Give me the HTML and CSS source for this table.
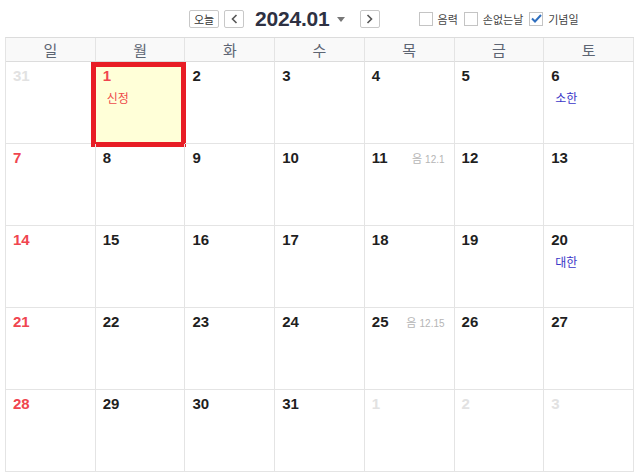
FILE: index.html
```html
<!DOCTYPE html>
<html lang="ko">
<head>
  <meta charset="UTF-8" />
  <meta name="viewport" content="width=device-width, initial-scale=1.0"/>
  <title>달력</title>
  <link rel="stylesheet" href="styles.css">
</head>
<body>
  <div class="toolbar">
    <div class="nav">
      <button type="button" class="btn-today">오늘</button>
      <button type="button" class="btn-arrow">
        <svg width="7" height="10" viewBox="0 0 7 10"><path d="M5.5 1 L1.5 5 L5.5 9" fill="none" stroke="#555" stroke-width="1.6"/></svg>
      </button>
      <span class="month">2024.01</span>
      <span class="caret"></span>
      <button type="button" class="btn-arrow">
        <svg width="7" height="10" viewBox="0 0 7 10"><path d="M1.5 1 L5.5 5 L1.5 9" fill="none" stroke="#555" stroke-width="1.6"/></svg>
      </button>
    </div>
    <div class="options">
      <label class="check"><span class="box"></span>음력</label>
      <label class="check"><span class="box"></span>손없는날</label>
      <label class="check"><span class="box on">
        <svg width="11" height="9" viewBox="0 0 11 9"><path d="M1 4.5 L4 7.5 L10 1" fill="none" stroke="#2f6fbf" stroke-width="2"/></svg>
      </span>기념일</label>
    </div>
  </div>

  <div class="calendar">
    <div class="week-head">
      <div>일</div><div>월</div><div>화</div><div>수</div><div>목</div><div>금</div><div>토</div>
    </div>
    <div class="days">
      <div class="day other"><span class="num">31</span></div>
      <div class="day today"><span class="num sun">1</span><div class="event red">신정</div></div>
      <div class="day"><span class="num">2</span></div>
      <div class="day"><span class="num">3</span></div>
      <div class="day"><span class="num">4</span></div>
      <div class="day"><span class="num">5</span></div>
      <div class="day"><span class="num">6</span><div class="event blue">소한</div></div>

      <div class="day"><span class="num sun">7</span></div>
      <div class="day"><span class="num">8</span></div>
      <div class="day"><span class="num">9</span></div>
      <div class="day"><span class="num">10</span></div>
      <div class="day"><span class="num">11</span><span class="lunar">음 <small>12.1</small></span></div>
      <div class="day"><span class="num">12</span></div>
      <div class="day"><span class="num">13</span></div>

      <div class="day"><span class="num sun">14</span></div>
      <div class="day"><span class="num">15</span></div>
      <div class="day"><span class="num">16</span></div>
      <div class="day"><span class="num">17</span></div>
      <div class="day"><span class="num">18</span></div>
      <div class="day"><span class="num">19</span></div>
      <div class="day"><span class="num">20</span><div class="event blue">대한</div></div>

      <div class="day"><span class="num sun">21</span></div>
      <div class="day"><span class="num">22</span></div>
      <div class="day"><span class="num">23</span></div>
      <div class="day"><span class="num">24</span></div>
      <div class="day"><span class="num">25</span><span class="lunar">음 <small>12.15</small></span></div>
      <div class="day"><span class="num">26</span></div>
      <div class="day"><span class="num">27</span></div>

      <div class="day"><span class="num sun">28</span></div>
      <div class="day"><span class="num">29</span></div>
      <div class="day"><span class="num">30</span></div>
      <div class="day"><span class="num">31</span></div>
      <div class="day other"><span class="num">1</span></div>
      <div class="day other"><span class="num">2</span></div>
      <div class="day other"><span class="num">3</span></div>
    </div>
  </div>
</body>
</html>
```

FILE: styles.css
```css
body {
  font-family: "Liberation Sans", "Noto Sans CJK KR", sans-serif;
  margin: 0;
  padding: 0;
  background-color: white;
  color: #222;
}
.toolbar {
  display: flex;
  align-items: center;
  height: 37px;
  padding-left: 189px;
  box-sizing: border-box;
}
.nav {
  display: flex;
  align-items: center;
}
button {
  background-color: white;
  border: 1px solid #c8c8c8;
  border-radius: 2px;
  padding: 0;
  height: 18px;
  cursor: pointer;
  display: flex;
  align-items: center;
  justify-content: center;
  font-family: "Noto Sans CJK KR", sans-serif;
}
.btn-today {
  width: 30px;
  font-size: 11px;
  color: #333;
}
.btn-arrow {
  width: 20px;
  margin-left: 5px;
}
.month {
  font-size: 21px;
  font-weight: bold;
  color: #2e3142;
  margin-left: 11px;
  letter-spacing: -0.2px;
}
.caret {
  width: 0;
  height: 0;
  border-left: 4px solid transparent;
  border-right: 4px solid transparent;
  border-top: 5px solid #777;
  margin: 2px 10px 0 7px;
}
.options {
  display: flex;
  align-items: center;
  margin-left: 39px;
  gap: 6px;
}
.check {
  display: flex;
  align-items: center;
  font-family: "Noto Sans CJK KR", sans-serif;
  font-size: 11px;
  color: #444;
}
.box {
  width: 12px;
  height: 12px;
  border: 1px solid #c4c4c4;
  margin-right: 5px;
  display: flex;
  align-items: center;
  justify-content: center;
}
.calendar {
  margin: 0 5px;
  border-top: 1px solid #dcdcdc;
  border-left: 1px solid #e4e4e4;
}
.week-head {
  display: grid;
  grid-template-columns: repeat(7, 1fr);
  background-color: #f9f9f9;
}
.week-head div {
  height: 23px;
  line-height: 23px;
  text-align: center;
  font-family: "Noto Sans CJK KR", sans-serif;
  font-size: 15px;
  color: #5d6573;
  border-right: 1px solid #e4e4e4;
  border-bottom: 1px solid #dcdcdc;
}
.days {
  display: grid;
  grid-template-columns: repeat(7, 1fr);
}
.day {
  position: relative;
  height: 76px;
  border-right: 1px solid #e4e4e4;
  border-bottom: 1px solid #e4e4e4;
  padding: 5px 0 0 7px;
}
.num {
  font-size: 15px;
  font-weight: bold;
  line-height: 18px;
  color: #1f1f1f;
}
.num.sun {
  color: #f0454f;
}
.other .num {
  color: #e2e2e2;
}
.event {
  font-family: "Noto Sans CJK KR", sans-serif;
  font-size: 12px;
  margin: 4px 0 0 4px;
}
.red {
  color: #ee4b4b;
}
.blue {
  color: #3b37c8;
}
.lunar {
  position: absolute;
  right: 9px;
  top: 6px;
  font-family: "Noto Sans CJK KR", sans-serif;
  font-size: 11px;
  color: #b5b5b5;
}
.lunar small {
  font-family: "Liberation Sans", sans-serif;
  font-size: 10px;
}
.today {
  background-color: #ffffd8;
}
.today::after {
  content: "";
  position: absolute;
  left: -5px;
  top: 0;
  width: 85px;
  height: 75px;
  border: 5px solid #e81d25;
}
```
